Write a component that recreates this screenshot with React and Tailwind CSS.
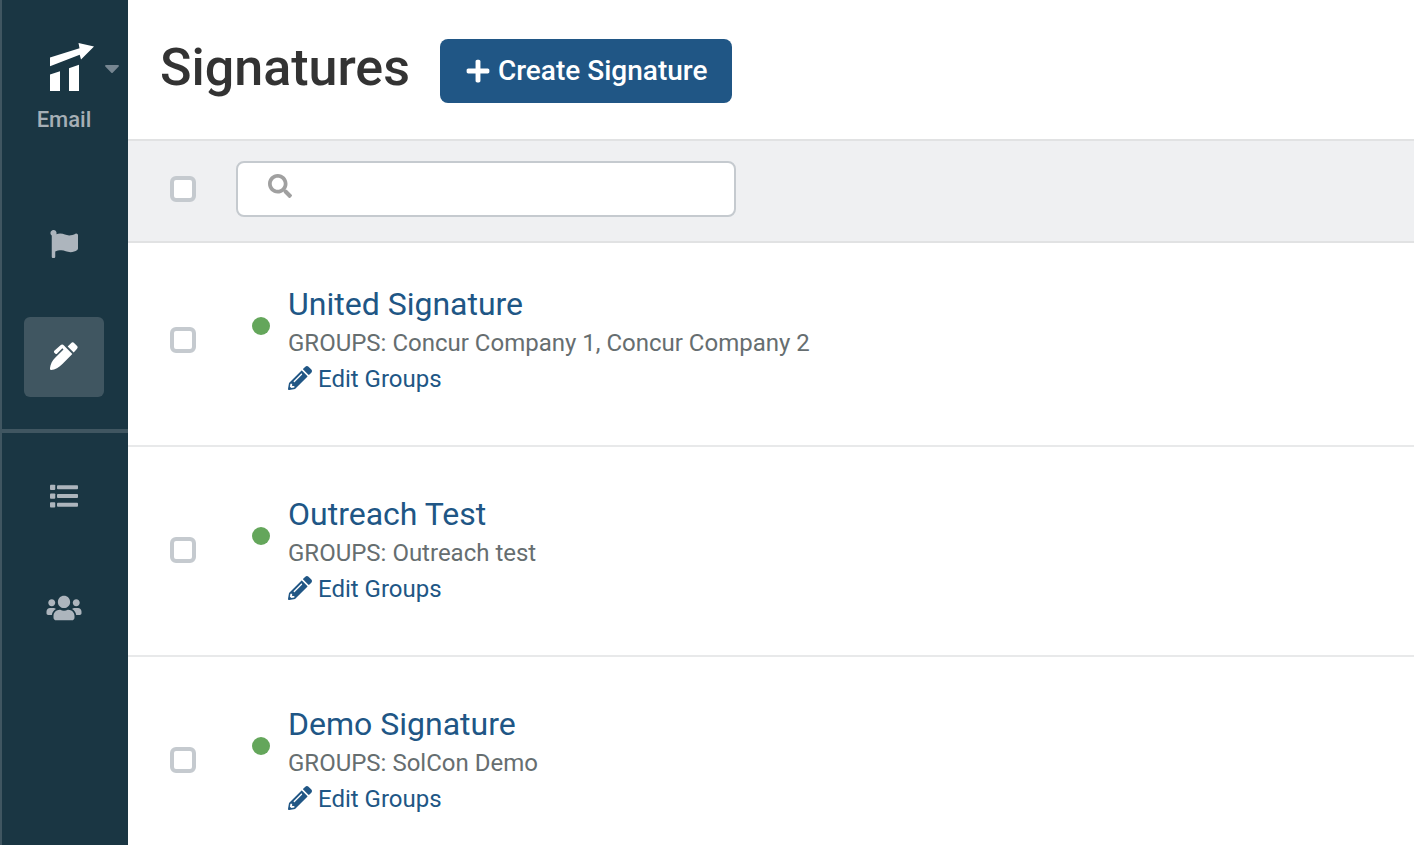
import { FaCaretDown, FaFlag, FaPencilAlt, FaPlus, FaSearch, FaUsers } from "react-icons/fa";

const signatures = [
  { id: "united", name: "United Signature", groups: "Concur Company 1, Concur Company 2" },
  { id: "outreach", name: "Outreach Test", groups: "Outreach test" },
  { id: "demo", name: "Demo Signature", groups: "SolCon Demo" },
];

function Logo() {
  return (
    <svg viewBox="0 0 46 50" className="h-[50px] w-[46px]" fill="currentColor" aria-hidden="true">
      <path d="M1 15.5 30.5 6.3 29.5 1 45 4.5 32 17.5 30.7 12.7 1 24.2Z" />
      <path d="M1 32.6 11 29.2V49H1Z" />
      <path d="M20 26.2 30 22.7V49H20Z" />
    </svg>
  );
}

function PenIcon() {
  return (
    <svg viewBox="0 0 84 84" className="size-7" fill="currentColor" aria-hidden="true">
      <path d="M53 13.5 63 3.5Q68-1.5 73 3.5L80.5 11Q85.5 16 80.5 21L71 31.500Z" />
      <path d="M48.500 17.500 67 36 38 65C27 76 15 83 3.500 84Q-.5 84-.2 80C1 68 6 57 15.500 47.500L40.500 22.500 37 19 21.500 34.500Q18.500 37.500 15.500 34.500L13 32Q10.500 29 13 26L31.500 9.500Q37 5 42 10.500Z" />
    </svg>
  );
}

function ListIcon() {
  return (
    <svg viewBox="0 0 512 512" className="size-7" fill="currentColor" aria-hidden="true">
      {[48, 208, 368].map((y) => (
        <g key={y}>
          <rect x="0" y={y} width="96" height="96" rx="16" />
          <rect x="128" y={y + 12} width="384" height="72" rx="16" />
        </g>
      ))}
    </svg>
  );
}

function Checkbox({ label }) {
  return (
    <input
      type="checkbox"
      aria-label={label}
      className="size-[26px] shrink-0 appearance-none rounded-md border-4 border-[#c5cacf] bg-white checked:bg-[#205685]"
    />
  );
}

function NavLink({ label, active, children }) {
  return (
    <a
      href="#"
      aria-label={label}
      aria-current={active ? "page" : undefined}
      className={
        active
          ? "flex size-20 items-center justify-center rounded-md bg-[#405661] pb-0.5 text-white"
          : "flex size-20 items-center justify-center rounded-md pb-0.5 text-[#adb5bd]"
      }
    >
      {children}
    </a>
  );
}

function Sidebar() {
  return (
    <nav
      aria-label="Main"
      className="flex w-32 shrink-0 flex-col bg-[#1a3643] shadow-[inset_2px_0_0_#405661]"
    >
      <button type="button" className="relative flex flex-col items-center pt-[42px] text-white">
        <span className="flex pl-4">
          <Logo />
        </span>
        <FaCaretDown className="absolute top-[56px] right-1 size-6 text-[#768691]" />
        <span className="mt-3 text-[22px] leading-8 font-medium text-[#a6afb6]">Email</span>
      </button>
      <div className="mt-[69px] flex flex-col items-center gap-8 border-b-4 border-[#405661] pb-8">
        <NavLink label="Campaigns">
          <FaFlag className="size-7" />
        </NavLink>
        <NavLink label="Signatures" active>
          <PenIcon />
        </NavLink>
      </div>
      <div className="mt-6 flex flex-col items-center gap-8">
        <NavLink label="Lists">
          <ListIcon />
        </NavLink>
        <NavLink label="Groups">
          <FaUsers className="h-7 w-9" />
        </NavLink>
      </div>
    </nav>
  );
}

function SignatureRow({ name, groups }) {
  return (
    <li className="flex items-center border-b-2 border-[#e8e9ea] pt-[47px] pr-8 pb-[49px] pl-[42px] first:pt-[41px]">
      <Checkbox label={`Select ${name}`} />
      <span className="mt-[33px] ml-14 size-[18px] shrink-0 self-start rounded-full bg-[#64a65b]" />
      <div className="ml-[18px]">
        <h2 className="text-[32px] leading-10 text-[#205685]">
          <a href="#">{name}</a>
        </h2>
        <p className="text-2xl leading-[38px] text-[#666e70]">GROUPS: {groups}</p>
        <button type="button" className="flex items-center gap-[6px] text-2xl leading-[34px] text-[#205685]">
          <FaPencilAlt className="mb-0.5 size-6" />
          Edit Groups
        </button>
      </div>
    </li>
  );
}

export default function App() {
  return (
    <div className="flex h-screen overflow-hidden bg-white font-[Roboto,sans-serif]">
      <Sidebar />
      <main className="min-w-0 flex-1">
        <header className="flex items-start gap-[30px] px-8 pt-[39px] pb-9">
          <h1 className="text-[52px] leading-[58px] font-medium text-[#333333]">Signatures</h1>
          <button
            type="button"
            className="flex h-16 items-center gap-[7px] rounded-lg bg-[#205685] px-[25px] text-[28px] font-medium text-white"
          >
            <FaPlus className="size-[26px]" />
            Create Signature
          </button>
        </header>
        <div className="flex items-center gap-10 border-y-2 border-[#e1e2e3] bg-[#eff0f2] px-[42px] pt-5 pb-6">
          <Checkbox label="Select all signatures" />
          <label className="flex h-14 w-[500px] items-center rounded-lg border-2 border-[#c5cacf] bg-white pr-4 pl-[30px]">
            <FaSearch className="mb-1.5 size-6 shrink-0 text-[#a0a0a0]" />
            <input
              type="text"
              aria-label="Search signatures"
              className="ml-3 min-w-0 flex-1 bg-transparent text-2xl text-[#333333] outline-none"
            />
          </label>
        </div>
        <ul>
          {signatures.map((s) => (
            <SignatureRow key={s.id} name={s.name} groups={s.groups} />
          ))}
        </ul>
      </main>
    </div>
  );
}
